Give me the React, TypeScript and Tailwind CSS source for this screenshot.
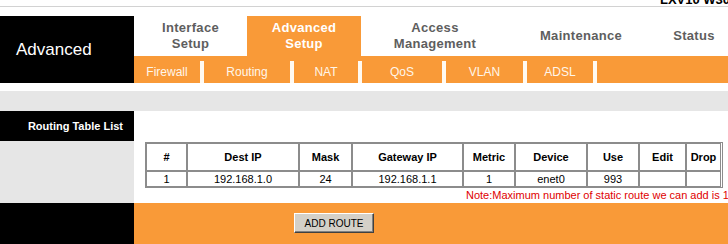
const ORANGE = "bg-[#f99a38]";

const tabs = [
  { label: ["Interface", "Setup"], w: "w-[113px]", active: false },
  { label: ["Advanced", "Setup"], w: "w-[114px]", active: true },
  { label: ["Access", "Management"], w: "w-[148px]", active: false },
  { label: ["Maintenance"], w: "w-[144px]", active: false },
  { label: ["Status"], w: "w-[82px]", active: false },
];

const subs = [
  { label: "Firewall", w: "w-[66px]" },
  { label: "Routing", w: "w-[86px]" },
  { label: "NAT", w: "w-[64px]" },
  { label: "QoS", w: "w-[80px]" },
  { label: "VLAN", w: "w-[77px]" },
  { label: "ADSL", w: "w-[66px]" },
];

const cols = [
  { h: "#", w: "w-[41px]", v: "1" },
  { h: "Dest IP", w: "w-[112px]", v: "192.168.1.0" },
  { h: "Mask", w: "w-[53px]", v: "24" },
  { h: "Gateway IP", w: "w-[111px]", v: "192.168.1.1" },
  { h: "Metric", w: "w-[52px]", v: "1" },
  { h: "Device", w: "w-[72px]", v: "enet0" },
  { h: "Use", w: "w-[52px]", v: "993" },
  { h: "Edit", w: "w-[47px]", v: "" },
  { h: "Drop", w: "w-[35px]", v: "" },
];

export default function App() {
  return (
    <div className="w-[728px] h-[244px] overflow-hidden bg-white font-['Liberation_Sans',Arial,sans-serif] text-black">
      {/* model name, cut off at the top */}
      <div className="h-[6px] overflow-hidden flex items-end">
        <span className="ml-[660px] whitespace-nowrap text-[13px] font-bold leading-none">LXV10 W300</span>
      </div>
      <div className="h-px bg-[#d2d2d2]" />
      <div className="h-[9px]" />

      {/* header */}
      <div className="flex h-[67px]">
        <div className="w-[134px] shrink-0 bg-black flex items-center pl-4 text-white text-[17px]">Advanced</div>
        <div className="flex-1 flex flex-col">
          <div className="h-[40px] flex">
            {tabs.map((t) => (
              <div
                key={t.label.join(" ")}
                className={`${t.w} shrink-0 flex flex-col items-center justify-center text-[13px] font-bold leading-[16px] tracking-[0.3px] ${
                  t.active ? `${ORANGE} text-white` : "text-[#5e5e5e]"
                }`}
              >
                {t.label.map((l) => (
                  <span key={l}>{l}</span>
                ))}
              </div>
            ))}
          </div>
          <div className={`h-[27px] flex ${ORANGE}`}>
            {subs.map((s) => (
              <div key={s.label} className="flex">
                <div className={`${s.w} flex items-center justify-center pt-[5px] text-[12px] text-[#fff6ea]`}>{s.label}</div>
                <div className="w-[4px] flex flex-col">
                  <div className="h-[5px]" />
                  <div className="flex-1 bg-[#fffaf2]" />
                </div>
              </div>
            ))}
          </div>
        </div>
      </div>

      <div className="h-[8px]" />
      <div className="h-[20px] bg-[#e6e6e6]" />

      {/* section title */}
      <div className="flex h-[30px]">
        <div className="w-[134px] shrink-0 bg-black flex items-center justify-end pr-[11px] text-white text-[11px] font-bold">
          Routing Table List
        </div>
        <div className="flex-1" />
      </div>

      {/* table */}
      <div className="flex h-[62px]">
        <div className="w-[134px] shrink-0 bg-[#e6e6e6]" />
        <div className="flex-1 flex flex-col pt-px pl-[11px] overflow-hidden">
          <div className="w-[578px] border border-[#8c8c8c] flex flex-col">
            <div className="flex h-[28px]">
              {cols.map((c) => (
                <div key={c.h} className={`${c.w} border border-[#8c8c8c] flex items-center justify-center text-[11px] font-bold`}>
                  {c.h}
                </div>
              ))}
            </div>
            <div className="flex h-[16px]">
              {cols.map((c) => (
                <div key={c.h} className={`${c.w} border border-[#8c8c8c] flex items-center justify-center text-[11px] leading-none`}>
                  {c.v}
                </div>
              ))}
            </div>
          </div>
          <div className="h-[15px] flex items-center pl-[321px] whitespace-nowrap text-[11px] text-[#e00000]">
            Note:Maximum number of static route we can add is 16.
          </div>
        </div>
      </div>

      {/* footer */}
      <div className="flex h-[41px]">
        <div className="w-[134px] shrink-0 bg-black" />
        <div className={`flex-1 ${ORANGE} pt-[10px] pl-[160px]`}>
          <button
            type="button"
            className="w-[80px] h-[20px] bg-[#d4d0c8] border border-t-white border-l-white border-r-[#404040] border-b-[#404040] shadow-[inset_-1px_-1px_0_#808080] text-[10px] text-black flex items-center justify-center"
          >
            ADD ROUTE
          </button>
        </div>
      </div>
    </div>
  );
}
